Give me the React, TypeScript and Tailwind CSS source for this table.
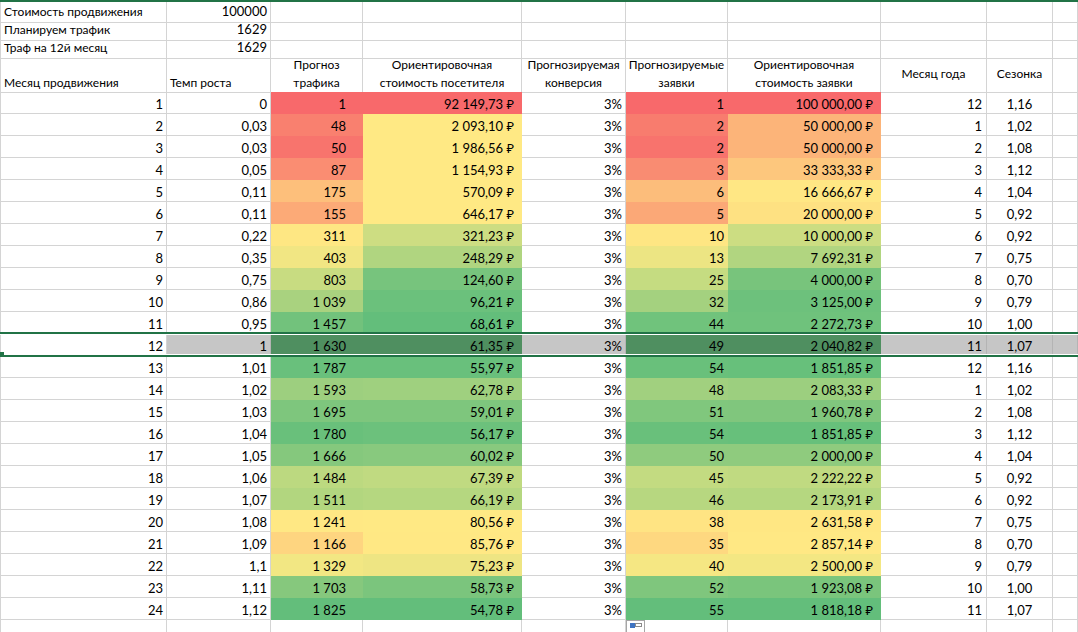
import React from "react";

interface Row {
  n: number;
  rate: string;
  traf: string;
  trafBg: string;
  cost: string;
  costBg: string;
  leads: string;
  leadsBg: string;
  leadCost: string;
  leadCostBg: string;
  month: number;
  season: string;
}

const rows: Row[] = [
  { n: 1, rate: "0", traf: "1", trafBg: "bg-[#f8696b]", cost: "92 149,73 ₽", costBg: "bg-[#f8696b]", leads: "1", leadsBg: "bg-[#f8696b]", leadCost: "100 000,00 ₽", leadCostBg: "bg-[#f8696b]", month: 12, season: "1,16" },
  { n: 2, rate: "0,03", traf: "48", trafBg: "bg-[#f9806f]", cost: "2 093,10 ₽", costBg: "bg-[#ffe984]", leads: "2", leadsBg: "bg-[#f87c6e]", leadCost: "50 000,00 ₽", leadCostBg: "bg-[#fcb479]", month: 1, season: "1,02" },
  { n: 3, rate: "0,03", traf: "50", trafBg: "bg-[#f8746d]", cost: "1 986,56 ₽", costBg: "bg-[#ffe984]", leads: "2", leadsBg: "bg-[#f8736d]", leadCost: "50 000,00 ₽", leadCostBg: "bg-[#fcb479]", month: 2, season: "1,08" },
  { n: 4, rate: "0,05", traf: "87", trafBg: "bg-[#fa8d72]", cost: "1 154,93 ₽", costBg: "bg-[#ffe984]", leads: "3", leadsBg: "bg-[#f98c72]", leadCost: "33 333,33 ₽", leadCostBg: "bg-[#fdc77d]", month: 3, season: "1,12" },
  { n: 5, rate: "0,11", traf: "175", trafBg: "bg-[#fdbf7b]", cost: "570,09 ₽", costBg: "bg-[#ffe984]", leads: "6", leadsBg: "bg-[#fcbd7b]", leadCost: "16 666,67 ₽", leadCostBg: "bg-[#ffe784]", month: 4, season: "1,04" },
  { n: 6, rate: "0,11", traf: "155", trafBg: "bg-[#fcaa77]", cost: "646,17 ₽", costBg: "bg-[#ffe984]", leads: "5", leadsBg: "bg-[#fba877]", leadCost: "20 000,00 ₽", leadCostBg: "bg-[#fee182]", month: 5, season: "0,92" },
  { n: 7, rate: "0,22", traf: "311", trafBg: "bg-[#fee783]", cost: "321,23 ₽", costBg: "bg-[#cddd82]", leads: "10", leadsBg: "bg-[#fee683]", leadCost: "10 000,00 ₽", leadCostBg: "bg-[#ccdd82]", month: 6, season: "0,92" },
  { n: 8, rate: "0,35", traf: "403", trafBg: "bg-[#f1e683]", cost: "248,29 ₽", costBg: "bg-[#b0d580]", leads: "13", leadsBg: "bg-[#ece583]", leadCost: "7 692,31 ₽", leadCostBg: "bg-[#b1d580]", month: 7, season: "0,75" },
  { n: 9, rate: "0,75", traf: "803", trafBg: "bg-[#c8dc81]", cost: "124,60 ₽", costBg: "bg-[#77c47d]", leads: "25", leadsBg: "bg-[#c5dc81]", leadCost: "4 000,00 ₽", leadCostBg: "bg-[#78c47c]", month: 8, season: "0,70" },
  { n: 10, rate: "0,86", traf: "1 039", trafBg: "bg-[#a9d27f]", cost: "96,21 ₽", costBg: "bg-[#6bc17c]", leads: "32", leadsBg: "bg-[#a4d17f]", leadCost: "3 125,00 ₽", leadCostBg: "bg-[#6dc17c]", month: 9, season: "0,79" },
  { n: 11, rate: "0,95", traf: "1 457", trafBg: "bg-[#72c27c]", cost: "68,61 ₽", costBg: "bg-[#63be7b]", leads: "44", leadsBg: "bg-[#70c37c]", leadCost: "2 272,73 ₽", leadCostBg: "bg-[#6fc27c]", month: 10, season: "1,00" },
  { n: 12, rate: "1", traf: "1 630", trafBg: "bg-[#4f8f60]", cost: "61,35 ₽", costBg: "bg-[#4f8f60]", leads: "49", leadsBg: "bg-[#4f8f60]", leadCost: "2 040,82 ₽", leadCostBg: "bg-[#4f8f60]", month: 11, season: "1,07" },
  { n: 13, rate: "1,01", traf: "1 787", trafBg: "bg-[#69c07c]", cost: "55,97 ₽", costBg: "bg-[#69c07c]", leads: "54", leadsBg: "bg-[#69c07b]", leadCost: "1 851,85 ₽", leadCostBg: "bg-[#67c07b]", month: 12, season: "1,16" },
  { n: 14, rate: "1,02", traf: "1 593", trafBg: "bg-[#9dcf7f]", cost: "62,78 ₽", costBg: "bg-[#9fd07f]", leads: "48", leadsBg: "bg-[#a1d07f]", leadCost: "2 083,33 ₽", leadCostBg: "bg-[#9ccf7f]", month: 1, season: "1,02" },
  { n: 15, rate: "1,03", traf: "1 695", trafBg: "bg-[#7ec67d]", cost: "59,01 ₽", costBg: "bg-[#7ec67d]", leads: "51", leadsBg: "bg-[#80c77d]", leadCost: "1 960,78 ₽", leadCostBg: "bg-[#80c67d]", month: 2, season: "1,08" },
  { n: 16, rate: "1,04", traf: "1 780", trafBg: "bg-[#69c07b]", cost: "56,17 ₽", costBg: "bg-[#6cc17c]", leads: "54", leadsBg: "bg-[#69c07b]", leadCost: "1 851,85 ₽", leadCostBg: "bg-[#67c07b]", month: 3, season: "1,12" },
  { n: 17, rate: "1,05", traf: "1 666", trafBg: "bg-[#85c87d]", cost: "60,02 ₽", costBg: "bg-[#88c97e]", leads: "50", leadsBg: "bg-[#8fcb7e]", leadCost: "2 000,00 ₽", leadCostBg: "bg-[#8fcb7e]", month: 4, season: "1,04" },
  { n: 18, rate: "1,06", traf: "1 484", trafBg: "bg-[#bcd980]", cost: "67,39 ₽", costBg: "bg-[#c0da81]", leads: "45", leadsBg: "bg-[#c3db81]", leadCost: "2 222,22 ₽", leadCostBg: "bg-[#c0da81]", month: 5, season: "0,92" },
  { n: 19, rate: "1,07", traf: "1 511", trafBg: "bg-[#b2d67f]", cost: "66,19 ₽", costBg: "bg-[#b5d780]", leads: "46", leadsBg: "bg-[#b7d780]", leadCost: "2 173,91 ₽", leadCostBg: "bg-[#b5d780]", month: 6, season: "0,92" },
  { n: 20, rate: "1,08", traf: "1 241", trafBg: "bg-[#ffe884]", cost: "80,56 ₽", costBg: "bg-[#ffe984]", leads: "38", leadsBg: "bg-[#ffe483]", leadCost: "2 631,58 ₽", leadCostBg: "bg-[#ffe783]", month: 7, season: "0,75" },
  { n: 21, rate: "1,09", traf: "1 166", trafBg: "bg-[#fed580]", cost: "85,76 ₽", costBg: "bg-[#ffe884]", leads: "35", leadsBg: "bg-[#fed880]", leadCost: "2 857,14 ₽", leadCostBg: "bg-[#ffe884]", month: 8, season: "0,70" },
  { n: 22, rate: "1,1", traf: "1 329", trafBg: "bg-[#f2e783]", cost: "75,23 ₽", costBg: "bg-[#eee583]", leads: "40", leadsBg: "bg-[#f5e783]", leadCost: "2 500,00 ₽", leadCostBg: "bg-[#f3e783]", month: 9, season: "0,79" },
  { n: 23, rate: "1,11", traf: "1 703", trafBg: "bg-[#86c87d]", cost: "58,73 ₽", costBg: "bg-[#7bc57d]", leads: "52", leadsBg: "bg-[#7fc67d]", leadCost: "1 923,08 ₽", leadCostBg: "bg-[#7ac57c]", month: 10, season: "1,00" },
  { n: 24, rate: "1,12", traf: "1 825", trafBg: "bg-[#63be7b]", cost: "54,78 ₽", costBg: "bg-[#63be7b]", leads: "55", leadsBg: "bg-[#63be7b]", leadCost: "1 818,18 ₽", leadCostBg: "bg-[#63be7b]", month: 11, season: "1,07" },
];

const GRID =
  "grid grid-cols-[167px_104px_92px_159px_104px_102px_153px_106px_66px_1fr]";
// plain white cell with excel gridlines
const W = "border-r border-b border-[#d4d4d4]";
// filled cell: the fill covers the gridlines
const F = "border-r border-b border-transparent";

function InfoRow({ label, value }: { label?: string; value?: string }) {
  return (
    <div className={`${GRID} h-[18px]`}>
      <div className={`${W} border-l flex items-center pl-[3px] whitespace-nowrap text-[12px]`}>{label}</div>
      <div className={`${W} flex items-center justify-end pr-[3px]`}>{value}</div>
      {Array.from({ length: 8 }).map((_, i) => (
        <div key={i} className={W} />
      ))}
    </div>
  );
}

function DataRow({ r }: { r: Row }) {
  const sel = r.n === 12;
  const plain = sel ? "border-r border-b border-[#b4b4b4] bg-[#c6c6c6]" : W;
  const cell = "flex items-end whitespace-nowrap leading-[18px]";
  return (
    <div className={`${GRID} h-[22px] relative`}>
      <div className={`${W} border-l ${cell} justify-end pr-[3px]`}>{r.n}</div>
      <div className={`${plain} ${cell} justify-end pr-[3px]`}>{r.rate}</div>
      <div className={`${F} ${r.trafBg} ${cell} justify-end pr-[16px]`}>{r.traf}</div>
      <div className={`${F} ${r.costBg} ${cell} justify-end pr-[7px]`}>{r.cost}</div>
      <div className={`${plain} ${cell} justify-end pr-[3px]`}>3%</div>
      <div className={`${F} ${r.leadsBg} ${cell} justify-end pr-[3px]`}>{r.leads}</div>
      <div className={`${F} ${r.leadCostBg} ${cell} justify-end pr-[7px]`}>{r.leadCost}</div>
      <div className={`${plain} ${cell} justify-end pr-[4px]`}>{r.month}</div>
      <div className={`${plain} ${cell} justify-center`}>{r.season}</div>
      <div className={plain} />
      {sel && (
        <>
          {/* row selection frame */}
          <div className="absolute left-0 right-0 -top-[2px] -bottom-[1px] border-y-2 border-[#217346] pointer-events-none z-10">
            <div className="absolute inset-0 border-y border-white" />
          </div>
          <div className="absolute left-0 top-[18px] w-[4px] h-[5px] bg-[#217346] z-20" />
        </>
      )}
    </div>
  );
}

export default function App() {
  return (
    <div className="relative w-[1078px] h-[632px] overflow-hidden bg-white text-black text-[13px] font-['Lato','Noto_Sans',sans-serif]">
      <div className="h-[2px] bg-[#217346]" />

      <InfoRow label="Стоимость продвижения" value="100000" />
      <InfoRow label="Планируем трафик" value="1629" />
      <InfoRow label="Траф на 12й месяц" value="1629" />

      {/* Header */}
      <div className={`${GRID} h-[36px] leading-[18px] text-[12px]`}>
        <div className={`${W} border-l flex items-end pl-[3px] whitespace-nowrap`}>Месяц продвижения</div>
        <div className={`${W} flex items-end pl-[3px] whitespace-nowrap`}>Темп роста</div>
        <div className={`${W} text-center`}>Прогноз<br />трафика</div>
        <div className={`${W} text-center whitespace-nowrap`}>Ориентировочная<br />стоимость посетителя</div>
        <div className={`${W} text-center overflow-hidden px-[1px]`}>Прогнозируемая<br />конверсия</div>
        <div className={`${W} text-center overflow-hidden px-[2px]`}>Прогнозируемые<br />заявки</div>
        <div className={`${W} text-center whitespace-nowrap`}>Ориентировочная<br />стоимость заявки</div>
        <div className={`${W} flex items-center justify-center`}>Месяц года</div>
        <div className={`${W} flex items-center justify-center`}>Сезонка</div>
        <div className={W} />
      </div>

      {rows.map((r) => (
        <DataRow key={r.n} r={r} />
      ))}

      <div className={`${GRID} h-[22px]`}>
        {Array.from({ length: 10 }).map((_, i) => (
          <div key={i} className={`${W} ${i === 0 ? "border-l" : ""}`} />
        ))}
      </div>

      {/* paste options button */}
      <div className="absolute left-[626px] top-[620px] w-[19px] h-[14px] bg-white border border-[#a6a6a6]">
        <div className="absolute left-[3px] top-[2px] w-[5px] h-[5px] bg-[#3f74c2]" />
        <div className="absolute left-[8px] top-[2px] w-[7px] h-[4px] bg-white border border-[#8c8c8c]" />
      </div>
    </div>
  );
}
